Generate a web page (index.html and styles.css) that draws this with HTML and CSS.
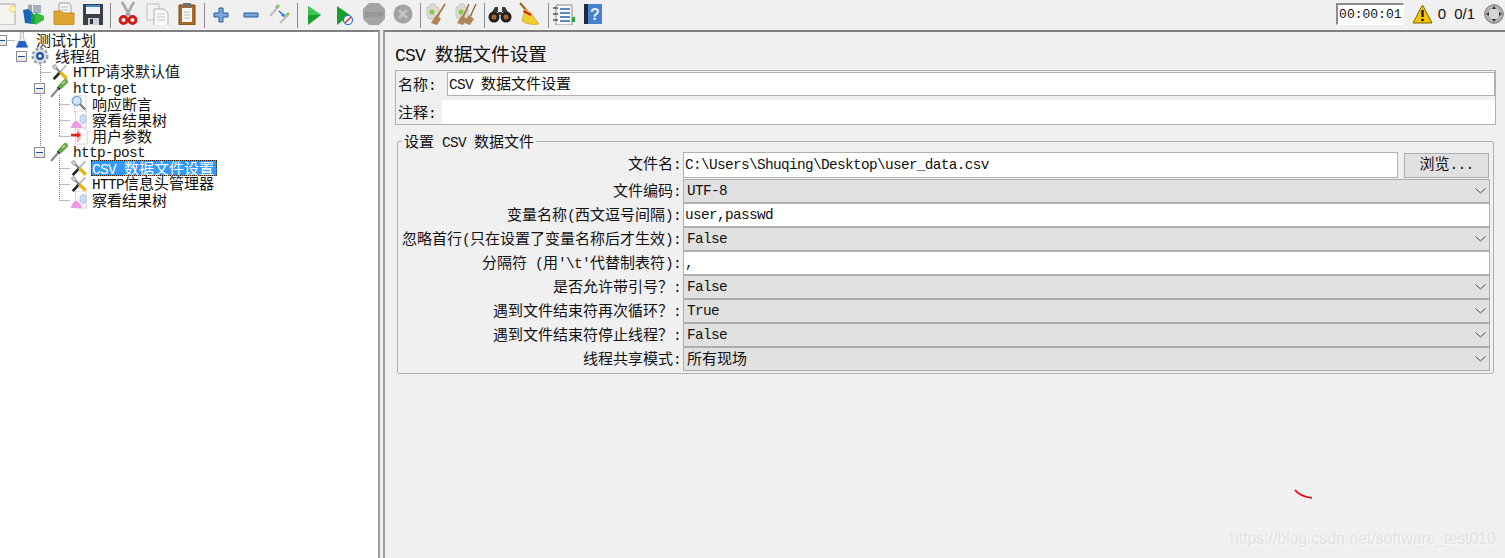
FILE: index.html
```html
<!DOCTYPE html>
<html lang="zh">
<head>
<meta charset="utf-8">
<title>CSV 数据文件设置</title>
<link rel="stylesheet" href="styles.css">
</head>
<body>
<svg class="defs" width="0" height="0" aria-hidden="true">
  <defs>
    <symbol id="i-tool" viewBox="0 0 20 20">
      <path d="M3 18 L10 10.500" stroke="#222" stroke-width="3"/>
      <path d="M10 10.500 L17 2.500" stroke="#b4b4b4" stroke-width="2"/>
      <path d="M1.500 3.500 L4.500 1.500 L7 5 L5 7 L3 6 Z" fill="#d0d0d0" stroke="#777" stroke-width=".7"/>
      <path d="M6 6 L11 11" stroke="#8a8a8a" stroke-width="2.400"/>
      <path d="M10.500 10.500 L17.500 17.500" stroke="#eab410" stroke-width="3.600"/>
    </symbol>
    <symbol id="i-pipette" viewBox="0 0 20 20">
      <path d="M2 19 L10 10" stroke="#888" stroke-width="2.200"/>
      <path d="M9 11 L12 8" stroke="#333" stroke-width="3.400"/>
      <path d="M12 8 L16.500 3.500" stroke="#6aa84a" stroke-width="5" stroke-linecap="round"/>
      <path d="M13 6 L16 3.500" stroke="#b9e09c" stroke-width="1.400"/>
    </symbol>
    <symbol id="i-gear" viewBox="0 0 20 20">
      <circle cx="10" cy="10" r="7.400" fill="#dfe3e8" stroke="#9aa0a8" stroke-width="2.400" stroke-dasharray="3 2"/>
      <circle cx="10" cy="10" r="5.600" fill="#d7dbe0"/>
      <circle cx="10" cy="10" r="3.900" fill="#1c4f9e"/>
      <circle cx="10" cy="10" r="1.800" fill="#e6eef8"/>
    </symbol>
    <symbol id="i-flask" viewBox="0 0 14 18">
      <path d="M5.500 1 H8.500 V7 L13 16 H1 L5.500 7 Z" fill="#e8ebf0" stroke="#a8adb5" stroke-width=".7"/>
      <path d="M4 10 H10 L13 16.500 H1 Z" fill="#2460c4"/>
    </symbol>
    <symbol id="i-doc-find" viewBox="0 0 20 20">
      <path d="M5 1 H18 V19 H5 Z" fill="#fbfbfb" stroke="#c8c8c8" stroke-width=".8"/>
      <circle cx="7.500" cy="6.500" r="5" fill="#cfe6fa" stroke="#86a6c4" stroke-width="1.600"/>
      <path d="M11 10 L17 16" stroke="#777" stroke-width="2.400"/>
    </symbol>
    <symbol id="i-doc-graph" viewBox="0 0 20 20">
      <path d="M6 0 H18 V19 H6 Z" fill="#fbfbfb" stroke="#c4c4c4" stroke-width=".8"/>
      <path d="M1 18 Q5 8 9 12 L13 16 V19 H1 Z" fill="#ee9ce0"/>
      <ellipse cx="14.500" cy="9" rx="3.500" ry="5" fill="#cbdcf6" stroke="#9ab4de" stroke-width=".7"/>
    </symbol>
    <symbol id="i-doc-arrow" viewBox="0 0 20 20">
      <path d="M6 1 H16 L19 4 V19 H6 Z" fill="#fbfbfb" stroke="#c4c4c4" stroke-width=".8"/>
      <path d="M8 3 Q14 9 8 16" fill="none" stroke="#f3b8b8" stroke-width="3"/>
      <path d="M1 9 H9" stroke="#e02020" stroke-width="3"/>
      <path d="M8 5.500 L12 9 L8 12.500 Z" fill="#e02020"/>
    </symbol>
    <symbol id="i-clear" viewBox="0 0 24 24">
      <path d="M3 6 L6 6 L7 3 L11 3 L12 6 L15 7 L15 18 L5 18 L3 14 Z" fill="#dcdcd4" stroke="#bcbcb4" stroke-width=".8"/>
      <circle cx="8" cy="11" r="2.600" fill="#8cc850"/>
    </symbol>
  </defs>
</svg>

<header class="toolbar">
  <span class="btn first"><svg width="16" height="24" viewBox="0 0 16 24"><path d="M-6 3 H15 V24 H-6 Z" fill="#f4f4ee" stroke="#a8a8a0"/><circle cx="13" cy="8" r="3" fill="#fff6c0" stroke="#f0d860"/></svg></span>
  <span class="btn"><svg width="24" height="24" viewBox="0 0 24 24"><path d="M6 4 Q8 3 10 4 L10 20 L6 20 Z" fill="#9aa4ae"/><path d="M11 4 H19 V12 H11 Z" fill="#a8b0b8"/><path d="M1 9 L6 8 L11 12 V23 L3 22 Z" fill="#1766b4"/><path d="M9 12 L14 14 V23 L9 23 Z" fill="#18a43c"/><path d="M13 11 L22 15 V19 L13 24 Z" fill="#3cbc3c"/></svg></span>
  <span class="btn"><svg width="24" height="24" viewBox="0 0 24 24"><path d="M7 2 H17 L19 5 V14 H7 Z" fill="#f6f6f6" stroke="#a0a0a0"/><path d="M9 6 H16 M9 9 H16" stroke="#b8b8b8"/><path d="M2 10 H9 L11 12 H22 L22 22 Q22 24 20 24 H4 Q2 24 2 22 Z" fill="#e0a52e" stroke="#b37d16" stroke-width=".8"/></svg></span>
  <span class="btn"><svg width="24" height="24" viewBox="0 0 24 24"><path d="M2 3 H22 V24 H2 Z" fill="#3a4048"/><path d="M5 4 H19 V13 H5 Z" fill="#f2f2f2"/><path d="M5 4 H19 V6 H5 Z" fill="#3e86d0"/><path d="M7 17 H18 V24 H7 Z" fill="#cfd2d6"/><path d="M9 18 H12 V23 H9 Z" fill="#30343a"/></svg></span>
  <i class="sep"></i>
  <span class="btn"><svg width="24" height="24" viewBox="0 0 24 24"><path d="M6 1 L14 15 M18 1 L10 15" stroke="#a8a8a8" stroke-width="2.600"/><circle cx="7.500" cy="19" r="3.500" fill="none" stroke="#d01a1a" stroke-width="2.800"/><circle cx="16.500" cy="19" r="3.500" fill="none" stroke="#d01a1a" stroke-width="2.800"/></svg></span>
  <span class="btn"><svg width="24" height="24" viewBox="0 0 24 24"><path d="M2 3 H14 V19 H2 Z" fill="#f4f4f4" stroke="#bcbcbc"/><path d="M9 8 H19 L23 12 V25 H9 Z" fill="#fafafa" stroke="#b0b0b0"/><path d="M12 13 H20 M12 16 H20 M12 19 H20" stroke="#c4c4c4"/></svg></span>
  <span class="btn"><svg width="24" height="24" viewBox="0 0 24 24"><path d="M4 4 H20 V24 H4 Z" fill="#a86a24" stroke="#7a4a14"/><path d="M7 7 H17 V21 H7 Z" fill="#f6f6f6"/><path d="M8 2 H16 V6 H8 Z" fill="#707070"/><path d="M9 11 H15 M9 14 H15 M9 17 H15" stroke="#bcbcbc"/></svg></span>
  <i class="sep"></i>
  <span class="btn"><svg width="24" height="24" viewBox="0 0 24 24"><path d="M10 7 H14 V12 H19 V16 H14 V21 H10 V16 H5 V12 H10 Z" fill="#7aa8dc" stroke="#2a5c9c"/></svg></span>
  <span class="btn"><svg width="24" height="24" viewBox="0 0 24 24"><path d="M5 12 H19 V16 H5 Z" fill="#7aa8dc" stroke="#2a5c9c"/></svg></span>
  <span class="btn"><svg width="24" height="24" viewBox="0 0 24 24"><path d="M2 15 L10 6" stroke="#c0c4c0" stroke-width="2.400"/><path d="M8 7 L11 4" stroke="#90c070" stroke-width="3"/><path d="M12 22 L20 14" stroke="#c0c4c0" stroke-width="2.400"/><path d="M18 15 L21 12" stroke="#90c070" stroke-width="3"/><path d="M11 10 L16 15" stroke="#2a7ae0" stroke-width="1.600"/><path d="M17 16 L13 15 L16 12 Z" fill="#2a7ae0"/></svg></span>
  <i class="sep"></i>
  <span class="btn"><svg width="24" height="24" viewBox="0 0 24 24"><path d="M5 5 L18 14 L5 24 Z" fill="#18a02c"/><path d="M5 5 L18 14 L5 14 Z" fill="#3cc850"/></svg></span>
  <span class="btn"><svg width="24" height="24" viewBox="0 0 24 24"><path d="M5 5 L18 14 L5 24 Z" fill="#18a02c"/><circle cx="16" cy="19" r="4.500" fill="#f4f8ff" stroke="#2a70d0" stroke-width="1.200"/><path d="M13 22 L19 16" stroke="#e02020" stroke-width="1.200"/></svg></span>
  <span class="btn"><svg width="24" height="24" viewBox="0 0 24 24"><path d="M7 2 H17 L23 8 V18 L17 24 H7 L1 18 V8 Z" fill="#a4a4a4"/><text class="stop" x="12" y="16">STOP</text></svg></span>
  <span class="btn"><svg width="24" height="24" viewBox="0 0 24 24"><circle cx="12" cy="13" r="9.500" fill="#a2a2a2"/><path d="M8 9 L16 17 M16 9 L8 17" stroke="#c4c4c4" stroke-width="2.600"/></svg></span>
  <i class="sep"></i>
  <span class="btn nudge"><svg width="24" height="24" viewBox="0 0 24 24"><use href="#i-clear"/><path d="M21 3 L13 16" stroke="#9c6a3a" stroke-width="1.500"/><path d="M12 14 L17 18 L13 24 L7 22 Z" fill="#b08458"/></svg></span>
  <span class="btn nudge"><svg width="24" height="24" viewBox="0 0 24 24"><use href="#i-clear"/><path d="M16 3 L10 16 M23 3 L17 16" stroke="#9c6a3a" stroke-width="1.500"/><path d="M9 14 L14 18 L10 24 L4 22 Z" fill="#b08458"/><path d="M16 14 L21 18 L17 24 L11 22 Z" fill="#b08458"/></svg></span>
  <i class="sep"></i>
  <span class="btn nudge"><svg width="24" height="24" viewBox="0 0 24 24"><circle cx="6" cy="16" r="5.500" fill="#1e1e1e"/><circle cx="18" cy="16" r="5.500" fill="#1e1e1e"/><path d="M4 11 L7 6 H10 V14 H14 V6 H17 L20 11 Z" fill="#3a3a3a"/><circle cx="6" cy="16" r="2.500" fill="#a86830"/><circle cx="18" cy="16" r="2.500" fill="#a86830"/></svg></span>
  <span class="btn nudge"><svg width="24" height="24" viewBox="0 0 24 24"><path d="M3 2 L10 10" stroke="#a06a20" stroke-width="2.200"/><path d="M8 8 L14 12 L22 23 Q12 25 5 20 Z" fill="#f0cc30" stroke="#c4a020" stroke-width=".6"/><path d="M6.500 10 L14 14" stroke="#d02020" stroke-width="2.200"/></svg></span>
  <i class="sep"></i>
  <span class="btn nudge"><svg width="24" height="24" viewBox="0 0 24 24"><path d="M4 4 H20 V24 H4 Z" fill="#fafafa" stroke="#8c8c8c"/><path d="M8 8 H18 M8 12 H18 M8 16 H18 M8 20 H18" stroke="#2a60b0" stroke-width="1.400"/><path d="M1 7 H6 M1 13 H6 M1 19 H6" stroke="#555" stroke-width="1.600"/><path d="M20 16 H23 V21 H20 Z" fill="#30a040"/></svg></span>
  <span class="btn nudge"><svg width="24" height="24" viewBox="0 0 24 24"><path d="M3 3 H21 V23 H3 Z" fill="#4a80d0"/><path d="M3 3 H7 V23 H3 Z" fill="#1e2a40"/><text class="help" x="14" y="19">?</text></svg></span>
  <div class="status">
    <span class="timer">00:00:01</span>
    <svg class="warn" width="21" height="20" viewBox="0 0 21 20"><path d="M10.500 1 L20 19 H1 Z" fill="#f6c400" stroke="#7a6400"/><path d="M10.500 6 V13" stroke="#111" stroke-width="2.200"/><circle cx="10.500" cy="16" r="1.300" fill="#111"/></svg>
    <span class="count">0</span>
    <span class="count ratio">0/1</span>
    <svg class="expand" width="20" height="20" viewBox="0 0 20 20"><circle cx="10" cy="10" r="9.300" fill="#b0b0b0" stroke="#787878"/><circle cx="10" cy="10" r="5.500" fill="#d4d4d4"/><path d="M10 2 L12 5 H8 Z M10 18 L12 15 H8 Z M2 10 L5 8 V12 Z M18 10 L15 8 V12 Z" fill="#333"/></svg>
  </div>
</header>

<main class="workspace">
  <nav class="tree">
    <svg class="connectors" width="120" height="210" viewBox="0 0 120 210">
      <path d="M7.500 8.500 H15 M40.500 31 V116 M40.500 40.500 H51 M59.500 63 V104 M59.500 72.500 H70 M59.500 88.500 H70 M59.500 104.500 H70 M59.500 126 V168 M59.500 136.500 H70 M59.500 152.500 H70 M59.500 168.500 H70" fill="none" stroke="#777" stroke-dasharray="1 1"/>
    </svg>
    <div class="row root"><i class="exp"></i><svg class="ic flask"><use href="#i-flask"/></svg><span>测试计划</span></div>
    <div class="row group"><i class="exp"></i><svg class="ic gear"><use href="#i-gear"/></svg><span>线程组</span></div>
    <div class="row item2"><svg class="ic leaf"><use href="#i-tool"/></svg><span><b>HTTP</b>请求默认值</span></div>
    <div class="row branch"><i class="exp"></i><svg class="ic pip"><use href="#i-pipette"/></svg><span><b>http-get</b></span></div>
    <div class="row item3"><svg class="ic leaf"><use href="#i-doc-find"/></svg><span>响应断言</span></div>
    <div class="row item3"><svg class="ic leaf"><use href="#i-doc-graph"/></svg><span>察看结果树</span></div>
    <div class="row item3"><svg class="ic leaf"><use href="#i-doc-arrow"/></svg><span>用户参数</span></div>
    <div class="row branch"><i class="exp"></i><svg class="ic pip"><use href="#i-pipette"/></svg><span><b>http-post</b></span></div>
    <div class="row item3"><svg class="ic leaf"><use href="#i-tool"/></svg><span class="selected"><b>CSV&nbsp;</b>数据文件设置</span></div>
    <div class="row item3"><svg class="ic leaf"><use href="#i-tool"/></svg><span><b>HTTP</b>信息头管理器</span></div>
    <div class="row item3"><svg class="ic leaf"><use href="#i-doc-graph"/></svg><span>察看结果树</span></div>
  </nav>

  <section class="editor">
    <h1 class="title"><b>CSV&nbsp;</b>数据文件设置</h1>
    <div class="namebox">
      <div class="namerow">
        <label class="namelabel">名称<b>:</b></label>
        <div class="field grow"><span><b>CSV&nbsp;</b>数据文件设置</span></div>
      </div>
      <div class="namerow">
        <label class="commentlabel">注释<b>:</b></label>
        <div class="comment"></div>
      </div>
    </div>

    <fieldset class="group-box">
      <legend>设置<b>&nbsp;CSV&nbsp;</b>数据文件</legend>
      <div class="form">
        <label class="lbl">文件名<b>:</b></label>
        <div class="filerow">
          <div class="field grow"><b>C:\Users\Shuqing\Desktop\user_data.csv</b></div>
          <button class="browse" type="button">浏览<b>...</b></button>
        </div>
        <label class="lbl">文件编码<b>:</b></label>
        <div class="select"><b>UTF-8</b><svg class="chev" width="11" height="6" viewBox="0 0 11 6"><path d="M.5 .5 L5.500 5 L10.500 .5" fill="none" stroke="#555"/></svg></div>
        <label class="lbl">变量名称<b>(</b>西文逗号间隔<b>):</b></label>
        <div class="field"><b>user,passwd</b></div>
        <label class="lbl">忽略首行<b>(</b>只在设置了变量名称后才生效<b>):</b></label>
        <div class="select"><b>False</b><svg class="chev" width="11" height="6" viewBox="0 0 11 6"><path d="M.5 .5 L5.500 5 L10.500 .5" fill="none" stroke="#555"/></svg></div>
        <label class="lbl">分隔符<b>&nbsp;(</b>用<b>'\t'</b>代替制表符<b>):</b></label>
        <div class="field"><b>,</b></div>
        <label class="lbl">是否允许带引号？<b>:</b></label>
        <div class="select"><b>False</b><svg class="chev" width="11" height="6" viewBox="0 0 11 6"><path d="M.5 .5 L5.500 5 L10.500 .5" fill="none" stroke="#555"/></svg></div>
        <label class="lbl">遇到文件结束符再次循环？<b>:</b></label>
        <div class="select"><b>True</b><svg class="chev" width="11" height="6" viewBox="0 0 11 6"><path d="M.5 .5 L5.500 5 L10.500 .5" fill="none" stroke="#555"/></svg></div>
        <label class="lbl">遇到文件结束符停止线程？<b>:</b></label>
        <div class="select"><b>False</b><svg class="chev" width="11" height="6" viewBox="0 0 11 6"><path d="M.5 .5 L5.500 5 L10.500 .5" fill="none" stroke="#555"/></svg></div>
        <label class="lbl">线程共享模式<b>:</b></label>
        <div class="select"><span class="cjkval">所有现场</span><svg class="chev" width="11" height="6" viewBox="0 0 11 6"><path d="M.5 .5 L5.500 5 L10.500 .5" fill="none" stroke="#555"/></svg></div>
      </div>
    </fieldset>
  </section>
</main>

<svg class="scribble" width="20" height="12" viewBox="0 0 20 12"><path d="M1 1 Q5 7 18 9" fill="none" stroke="#f00000" stroke-width="1.600"/></svg>
<div class="watermark">https://blog.csdn.net/software_test010</div>
</body>
</html>
```
FILE: styles.css
```css
* { box-sizing: border-box; }
html, body { margin: 0; height: 558px; overflow: hidden; }
body {
  position: relative;
  background: #f0f0f0;
  color: #111;
  font-family: "Noto Sans CJK SC", "Liberation Mono", sans-serif;
  font-size: 15px;
  line-height: 16px;
  display: flex;
  flex-direction: column;
}
b { font-family: "Liberation Mono", monospace; font-weight: 400; font-size: 14.4px; letter-spacing: -.64px; line-height: 1; }
.defs { position: absolute; }

.toolbar { height: 30px; display: flex; align-items: flex-start; flex: none; }
.btn { width: 29.5px; height: 30px; display: flex; align-items: flex-start; justify-content: center; padding-top: 1px; flex: none; }
.btn.first { width: 19.7px; justify-content: flex-start; }
.btn.nudge svg { margin-left: -4px; }
.sep { width: 5px; height: 25px; margin-top: 3px; flex: none; display: flex; justify-content: flex-start; }
.sep::before { content: ""; width: 1px; height: 100%; margin-left: 2px; background: #8c8c8c; }
.stop { font: 700 7px "Liberation Sans", sans-serif; fill: #8a8a8a; text-anchor: middle; }
.help { font: 700 16px "Liberation Sans", sans-serif; fill: #e8f0ff; text-anchor: middle; }

.status { margin-left: auto; display: flex; align-items: center; height: 28px; }
.timer {
  width: 68px; height: 22px; margin-right: 8px;
  background: #fff; border: 1px solid #fff; border-top: 2px solid #8c8c8c; border-left: 2px solid #8c8c8c;
  font: 13px/19px "Liberation Mono", monospace; text-align: center;
}
.warn { margin-right: 5px; flex: none; }
.count { font: 15px/16px "Liberation Sans", sans-serif; margin-right: 8px; }
.ratio { margin-right: 9px; }
.expand { margin-right: 1px; flex: none; }

.workspace { flex: 1; display: flex; min-height: 0; }
.tree {
  position: relative; width: 380px; flex: none;
  background: #fff;
  border-top: 2px solid #808080; border-right: 2px solid #a0a0a0;
  overflow: hidden;
}
.connectors { position: absolute; left: 0; top: 0; }
.row { position: relative; display: flex; align-items: center; height: 16px; white-space: nowrap; }
.row.root { padding-left: 0; margin-left: -4px; }
.row.group { padding-left: 16px; }
.row.item2 { padding-left: 51px; }
.row.branch { padding-left: 34px; }
.row.item3 { padding-left: 70px; }
.exp {
  width: 11px; height: 11px; flex: none;
  background: linear-gradient(#fff, #e4e4e4);
  border: 1px solid #8c8c8c;
  display: flex; align-items: center; justify-content: center;
}
.exp::before { content: ""; width: 7px; height: 1px; background: #1e4a8c; }
.ic { flex: none; overflow: visible; }
.flask { width: 14px; height: 18px; margin: 0 7px 0 8px; }
.gear { width: 20px; height: 20px; margin: 0 5px 0 3px; }
.leaf { width: 18px; height: 18px; margin-right: 4px; }
.pip { width: 20px; height: 20px; margin: 0 4px; }
.selected {
  background: #3399ff; color: #fff;
  outline: 1px dotted #402000; outline-offset: -1px;
  padding: 0 3px 0 1px; margin-left: -1px; height: 16px;
}

.editor { flex: 1; min-width: 0; margin-left: 3px; border-top: 2px solid #808080; border-left: 2px solid #a0a0a0; padding: 11px 9px 0 10px; }
.title { margin: 0 0 7px; font-size: 18.67px; font-weight: 400; line-height: 20px; height: 20px; white-space: nowrap; }
.title b { font-size: 18px; letter-spacing: -.8px; }

.namebox { height: 55px; border: 1px solid #b0b0b0; padding: 1px 0 0 2px; }
.namerow { display: flex; height: 24px; margin-bottom: 4px; align-items: stretch; }
.namelabel { width: 49px; line-height: 24px; flex: none; }
.commentlabel { width: 44px; line-height: 24px; flex: none; }
.comment { flex: 1; background: #fff; }

.field {
  display: flex; align-items: center;
  background: #fff; border: 1px solid #b0b0b0; padding-left: 1px;
  white-space: pre; min-width: 0;
}
.grow { flex: 1; }

.group-box {
  margin: 8px 2px 0 2px; padding: 3px 3px 2px 0; min-width: 0;
  border: 1px solid #b0b0b0; border-radius: 2px;
}
.group-box legend { margin-left: 4px; padding: 0 2px; height: 16px; line-height: 16px; }

.form {
  display: grid; grid-template-columns: 285px 1fr;
  grid-template-rows: 27px repeat(8, 24px);
}
.lbl { text-align: right; padding-right: 2px; line-height: 22px; height: 24px; white-space: nowrap; }
.filerow { display: flex; gap: 6px; height: 26px; }
.browse {
  width: 85px; height: 25px; margin: 1px 1px 0 0; padding: 0 0 4px; flex: none;
  background: #e1e1e1; border: 1px solid #adadad; color: #111;
  font: inherit; line-height: 18px;
}
.select {
  display: flex; align-items: center; justify-content: space-between;
  background: #e1e1e1; border: 1px solid #adadad; padding: 0 3px 0 3px;
}
.cjkval { line-height: 16px; margin-top: -2px; }
.chev { margin-right: 0; flex: none; }

.scribble { position: absolute; left: 1294px; top: 489px; }
.watermark {
  position: absolute; left: 1230px; top: 530px;
  font: 15.800px/18px "Liberation Sans", sans-serif;
  color: #e2e2e2; text-shadow: 1px 1px 1px #fafafa;
  white-space: nowrap;
}
```
